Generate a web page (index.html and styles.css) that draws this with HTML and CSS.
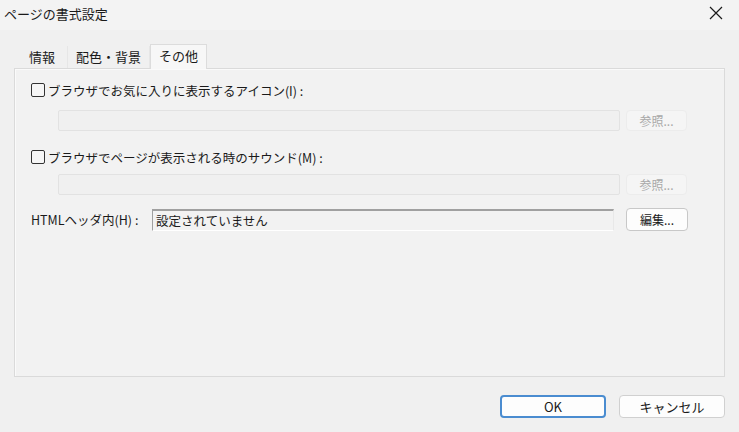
FILE: index.html
```html
<!DOCTYPE html>
<html lang="ja">
<head>
<meta charset="utf-8">
<title>ページの書式設定</title>
<link rel="stylesheet" href="styles.css">
</head>
<body>
<div class="dialog">
  <div class="titlebar">
    <span class="title">ページの書式設定</span>
    <svg class="close" width="14" height="14" viewBox="0 0 14 14"><path d="M1 1 L13 13 M13 1 L1 13" stroke="#1a1a1a" stroke-width="1.2" fill="none"/></svg>
  </div>
  <div class="body">
    <div class="tabs">
      <div class="tab t1">情報</div>
      <div class="tab t2">配色・背景</div>
      <div class="tab sel">その他</div>
    </div>
    <div class="panel">
      <label class="check"><span class="box"></span>ブラウザでお気に入りに表示するアイコン(I) :</label>
      <div class="row indent first">
        <div class="field disabled"></div>
        <div class="btn disabled">参照...</div>
      </div>
      <label class="check c2"><span class="box"></span>ブラウザでページが表示される時のサウンド(M) :</label>
      <div class="row indent">
        <div class="field disabled"></div>
        <div class="btn disabled">参照...</div>
      </div>
      <div class="row hrow">
        <span class="hlabel">HTMLヘッダ内(H) :</span>
        <div class="field sunken">設定されていません</div>
        <div class="btn">編集...</div>
      </div>
    </div>
    <div class="footer">
      <div class="btn big ok">OK</div>
      <div class="btn big">キャンセル</div>
    </div>
  </div>
</div>
</body>
</html>
```
FILE: styles.css
```css
* { box-sizing: border-box; }
html, body { margin: 0; padding: 0; }
body {
  width: 739px;
  height: 432px;
  background: #f0f0f0;
  font-family: "Noto Sans CJK JP", "Noto Sans", sans-serif;
  color: #1a1a1a;
  overflow: hidden;
}
.titlebar {
  height: 30px;
  display: flex;
  align-items: center;
  justify-content: space-between;
  padding: 0 16px 4px 4px;
  font-size: 13px;
  background: #f3f3f3;
}
.close { display: block; }
.body { padding: 13px 14px 0 14px; }
.tabs {
  display: flex;
  align-items: flex-end;
  height: 25px;
  padding-left: 3px;
  font-size: 13px;
}
.tab {
  height: 22px;
  display: flex;
  align-items: center;
  justify-content: center;
  border-right: 1px solid #e6e6e6;
  padding-bottom: 2px;
}
.t1 { width: 51px; }
.t2 { width: 82px; }
.tab.sel {
  width: 57px;
  height: 25px;
  background: #f7f7f7;
  border: 1px solid #dcdcdc;
  border-bottom: none;
  margin-bottom: -1px;
  position: relative;
  z-index: 1;
  padding-bottom: 3px;
}
.panel {
  height: 309px;
  border: 1px solid #dadada;
  box-shadow: inset 1px 1px 0 #fafafa;
  background: #f2f2f2;
  padding: 13px 16px 0 16px;
  display: flex;
  flex-direction: column;
  font-size: 12.5px;
}
.check {
  display: flex;
  align-items: center;
  height: 16px;
}
.c2 { margin-top: 18px; }
.box {
  width: 14px;
  height: 14px;
  border: 1px solid #333;
  border-radius: 2px;
  background: #f6f6f6;
  margin-right: 3px;
}
.row { display: flex; align-items: center; gap: 6px; }
.indent { padding-left: 27px; margin-top: 9px; }
.indent.first { margin-top: 12px; }
.field {
  height: 21px;
  width: 562px;
}
.field.disabled {
  border: 1px solid #e2e2e2;
  background: #f0f0f0;
  border-radius: 2px;
}
.btn {
  height: 21px;
  width: 61px;
  display: flex;
  align-items: center;
  justify-content: center;
  border: 1px solid #d0d0d0;
  border-radius: 4px;
  background: #fdfdfd;
  font-size: 12px;
}
.btn.disabled {
  color: #a8a8a8;
  border-color: #ececec;
  background: #f5f5f5;
}
.hrow { margin-top: 13px; gap: 0; }
.hlabel { width: 121px; }
.field.sunken {
  width: 462px;
  height: 22px;
  border-top: 2px solid #a0a0a0;
  border-left: 1px solid #a0a0a0;
  border-right: 1px solid #e8e8e8;
  border-bottom: 1px solid #ffffff;
  padding-left: 3px;
  display: flex;
  align-items: center;
  margin-right: 12px;
}
.hrow .btn { height: 23px; width: 62px; border-color: #c8c8c8; }
.footer {
  display: flex;
  justify-content: flex-end;
  gap: 13px;
  margin-top: 18px;
}
.btn.big {
  width: 106px;
  height: 23px;
  font-size: 13px;
}
.btn.ok {
  border: 2px solid #4a8cd0;
}
```
